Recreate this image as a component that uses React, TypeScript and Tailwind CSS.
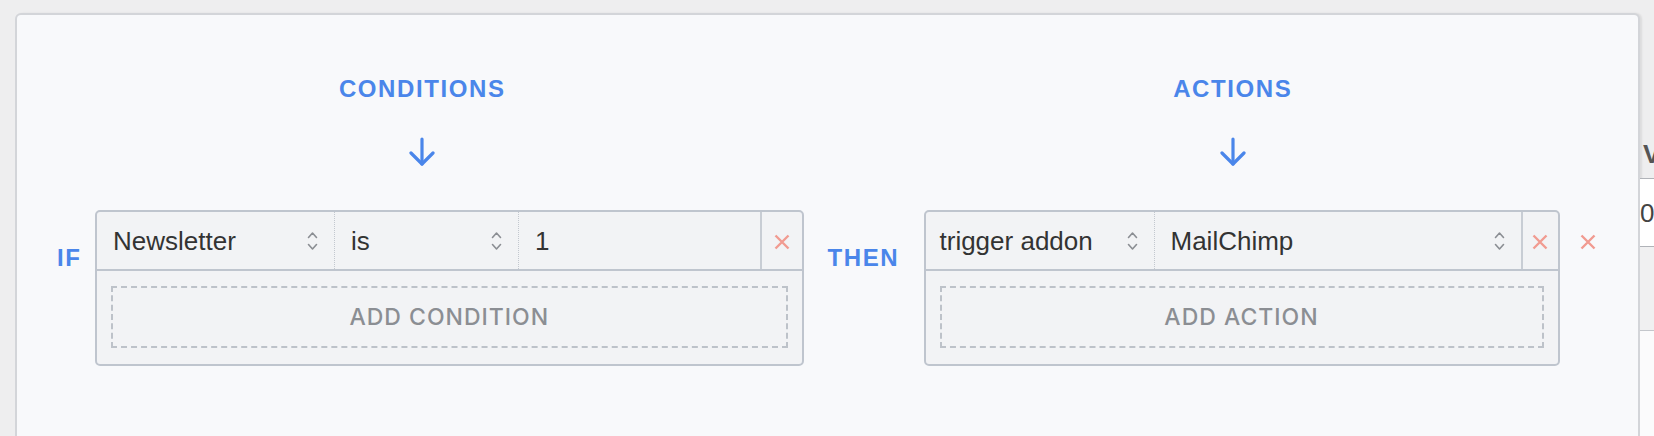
import clsx from 'clsx';

const ChevronUpDown = () => (
  <svg width="11" height="22" viewBox="0 0 11 22" fill="none" stroke="#8b8e93" strokeWidth="1.6" strokeLinecap="round" strokeLinejoin="round">
    <path d="M1.5 7.5 5.5 3l4 4.5" />
    <path d="M1.5 14.5 5.5 19l4-4.5" />
  </svg>
);

const RemoveIcon = () => (
  <svg width="16" height="16" viewBox="0 0 16 16" fill="none" stroke="#f19b91" strokeWidth="2.4">
    <path d="M1.5 1.5l13 13M14.5 1.5l-13 13" />
  </svg>
);

const ArrowDown = () => (
  <svg className="mt-[36px]" width="28" height="29" viewBox="0 0 28 29" fill="none" stroke="#4a86ea" strokeWidth="3.2" strokeLinecap="round" strokeLinejoin="round">
    <path d="M14 2v25" />
    <path d="M3 16 14 27l11-11" />
  </svg>
);

type SelectCellProps = {
  label: string;
  className?: string;
};

const SelectCell = ({ label, className }: SelectCellProps) => (
  <div className={clsx('flex h-full items-center justify-between border-r border-dotted border-[#c3c8cf] pr-[16px]', className)}>
    <span>{label}</span>
    <ChevronUpDown />
  </div>
);

const Heading = ({ title }: { title: string }) => (
  <div className="flex flex-col items-center pt-[62px]">
    <h2 className="text-[24px] leading-none font-bold tracking-[1.6px] text-[#4a86ea]">{title}</h2>
    <ArrowDown />
  </div>
);

const RuleBox = ({ children, addLabel, className }: { children: React.ReactNode; addLabel: string; className?: string }) => (
  <div className={clsx('h-[156px] rounded-[5px] border-2 border-[#bfc5ce] bg-[#f2f3f5]', className)}>
    <div className="flex h-[59px] items-center border-b-2 border-[#bfc5ce] text-[26px] leading-none text-[#333333]">
      {children}
    </div>
    <div className="px-[14px] pt-[15px] pb-[14px]">
      <button className="flex h-[62px] w-full items-center justify-center border-2 border-dashed border-[#bdc2c9] font-['Inter',sans-serif] text-[23px] leading-none font-medium tracking-[1px] text-[#8b8e93]">
        {addLabel}
      </button>
    </div>
  </div>
);

const RemoveCell = ({ className }: { className?: string }) => (
  <div className={clsx('flex h-full items-center justify-center border-l-2 border-[#c8cdd4] pt-[3px]', className)}>
    <RemoveIcon />
  </div>
);

export default function App() {
  return (
    <div className="flex h-[436px] w-[1654px] overflow-hidden bg-[#eeeeef] font-['Liberation_Sans',Arial,sans-serif]">
      <div className="mt-[13px] ml-[15px] h-[423px] w-[1625px] shrink-0 rounded-t-[6px] border-2 border-b-0 border-[#d3d5d9] bg-[#f8f9fb] shadow-[2px_0_2px_rgba(0,0,0,0.08)]">
        <div className="grid grid-cols-2">
          <div>
            <Heading title="CONDITIONS" />
            <div className="mt-[44px] flex pr-[24px] pl-[40px]">
              <span className="mt-[36px] w-[38px] text-[24px] leading-none font-bold tracking-[1.6px] text-[#4a86ea]">IF</span>
              <RuleBox addLabel="ADD CONDITION" className="flex-1">
                <SelectCell label="Newsletter" className="w-[238px] pl-[16px]" />
                <SelectCell label="is" className="w-[184px] pl-[16px]" />
                <div className="flex h-full flex-1 items-center pl-[16px]">1</div>
                <RemoveCell className="w-[42px]" />
              </RuleBox>
            </div>
          </div>
          <div>
            <Heading title="ACTIONS" />
            <div className="mt-[44px] flex">
              <span className="mt-[36px] w-[96px] text-[24px] leading-none font-bold tracking-[1.6px] text-[#4a86ea]">THEN</span>
              <RuleBox addLabel="ADD ACTION" className="w-[636px]">
                <SelectCell label="trigger addon" className="w-[229px] pl-[14px]" />
                <SelectCell label="MailChimp" className="flex-1 border-r-0 pl-[16px]" />
                <RemoveCell className="w-[37px]" />
              </RuleBox>
              <div className="mt-[24px] ml-[20px]">
                <RemoveIcon />
              </div>
            </div>
          </div>
        </div>
      </div>
      <div className="flex flex-1 flex-col overflow-hidden text-[26px] leading-none text-[#444444]">
        <div className="h-[130px]" />
        <div className="flex h-[49px] items-center border-b border-[#b0b3b8] pl-[3px] font-bold text-[#555555]">V</div>
        <div className="flex h-[68px] items-center border-b border-[#b0b3b8] bg-white">0</div>
        <div className="h-[84px] border-b border-[#c4c7cc] bg-[#f0f0f1]" />
        <div className="flex-1 bg-[#fbfbfc]" />
      </div>
    </div>
  );
}
